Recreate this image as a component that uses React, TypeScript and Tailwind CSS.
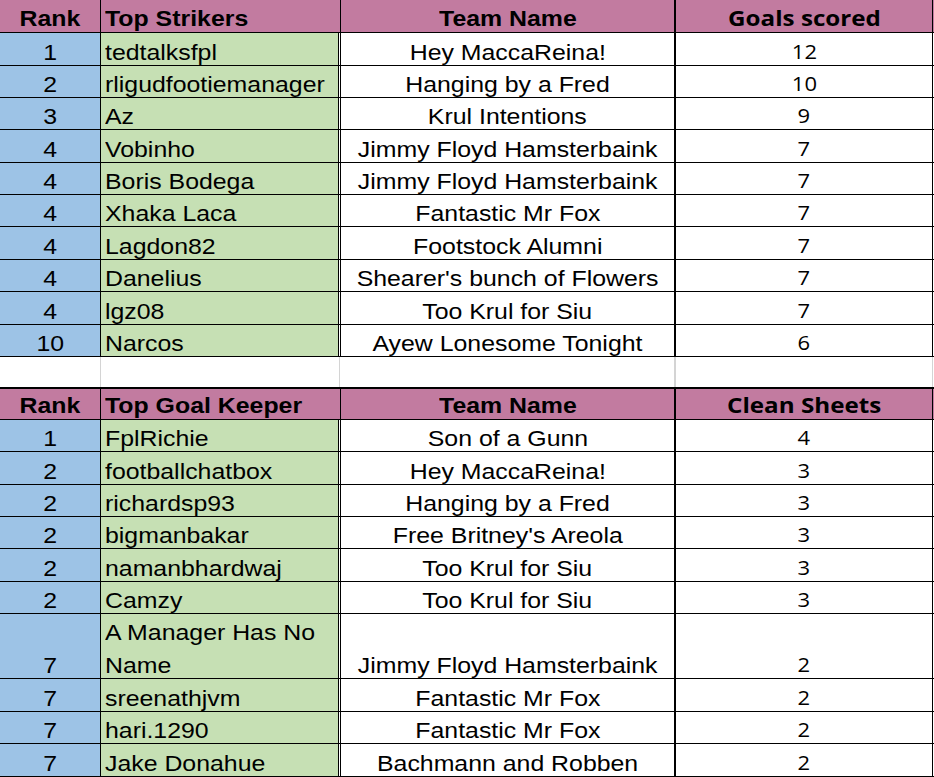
import React from "react"

type Row = {
  rank: string
  name: string[]
  team: string
  count: string
  h: string
}

const arial = "font-['Liberation_Sans',Arial,sans-serif]"
const calibri = "font-['Open_Sans','Noto_Sans',sans-serif]"

const strikers: Row[] = [
  { rank: "1", name: ["tedtalksfpl"], team: "Hey MaccaReina!", count: "12", h: "h-[33px]" },
  { rank: "2", name: ["rligudfootiemanager"], team: "Hanging by a Fred", count: "10", h: "h-[32px]" },
  { rank: "3", name: ["Az"], team: "Krul Intentions", count: "9", h: "h-[32px]" },
  { rank: "4", name: ["Vobinho"], team: "Jimmy Floyd Hamsterbaink", count: "7", h: "h-[33px]" },
  { rank: "4", name: ["Boris Bodega"], team: "Jimmy Floyd Hamsterbaink", count: "7", h: "h-[32px]" },
  { rank: "4", name: ["Xhaka Laca"], team: "Fantastic Mr Fox", count: "7", h: "h-[32px]" },
  { rank: "4", name: ["Lagdon82"], team: "Footstock Alumni", count: "7", h: "h-[33px]" },
  { rank: "4", name: ["Danelius"], team: "Shearer's bunch of Flowers", count: "7", h: "h-[32px]" },
  { rank: "4", name: ["lgz08"], team: "Too Krul for Siu", count: "7", h: "h-[33px]" },
  { rank: "10", name: ["Narcos"], team: "Ayew Lonesome Tonight", count: "6", h: "h-[32px]" },
]

const keepers: Row[] = [
  { rank: "1", name: ["FplRichie"], team: "Son of a Gunn", count: "4", h: "h-[32px]" },
  { rank: "2", name: ["footballchatbox"], team: "Hey MaccaReina!", count: "3", h: "h-[33px]" },
  { rank: "2", name: ["richardsp93"], team: "Hanging by a Fred", count: "3", h: "h-[32px]" },
  { rank: "2", name: ["bigmanbakar"], team: "Free Britney's Areola", count: "3", h: "h-[32px]" },
  { rank: "2", name: ["namanbhardwaj"], team: "Too Krul for Siu", count: "3", h: "h-[33px]" },
  { rank: "2", name: ["Camzy"], team: "Too Krul for Siu", count: "3", h: "h-[32px]" },
  { rank: "7", name: ["A Manager Has No", "Name"], team: "Jimmy Floyd Hamsterbaink", count: "2", h: "h-[65px]" },
  { rank: "7", name: ["sreenathjvm"], team: "Fantastic Mr Fox", count: "2", h: "h-[33px]" },
  { rank: "7", name: ["hari.1290"], team: "Fantastic Mr Fox", count: "2", h: "h-[32px]" },
  { rank: "7", name: ["Jake Donahue"], team: "Bachmann and Robben", count: "2", h: "h-[33px]" },
]

// excel text looks a bit wider than plain arial, so stretch it a little
function Wide({ children, left, num }: { children: React.ReactNode; left?: boolean; num?: boolean }) {
  return (
    <span
      className={`inline-block whitespace-nowrap leading-[24px] ${num ? "scale-x-[1.1]" : "scale-x-[1.13]"} ${left ? "origin-left" : ""}`}
    >
      {children}
    </span>
  )
}

function HeaderRow({ title, last, top }: { title: string; last: string; top?: boolean }) {
  return (
    <div
      className={`flex bg-[#c27ba0] font-bold border-b border-black leading-[24px] ${top ? "h-[33px] border-t-2" : "h-[33px]"}`}
    >
      <div className="w-[101px] border-r border-black flex items-end justify-center pb-[1px] text-[22px]">
        <Wide>Rank</Wide>
      </div>
      <div className="w-[240px] border-r border-black flex items-end pl-[4px] pb-[1px] text-[22px]">
        <Wide left>{title}</Wide>
      </div>
      <div className="w-[335px] border-r-2 border-black flex items-end justify-center pb-[1px] text-[22px]">
        <Wide>Team Name</Wide>
      </div>
      <div className={`w-[257px] border-r border-black flex items-end justify-center pb-[3px] text-[22px] ${calibri}`}>
        <Wide num>{last}</Wide>
      </div>
    </div>
  )
}

function BodyRow({ row }: { row: Row }) {
  return (
    <div className={`flex border-b border-black leading-[24px] ${row.h}`}>
      <div className="w-[101px] border-r border-black bg-[#9dc3e6] flex items-end justify-center text-[22px]">
        <Wide>{row.rank}</Wide>
      </div>
      <div className="w-[238px] border-r border-black bg-[#c6e0b4] flex flex-col justify-end pl-[4px] text-[22px]">
        {row.name.map((line, i) => (
          <div key={i} className={`leading-[24px] ${i < row.name.length - 1 ? "mb-[9px]" : ""}`}>
            <Wide left>{line}</Wide>
          </div>
        ))}
      </div>
      <div className="ml-px w-[336px] border-l border-r-2 border-black flex items-end justify-center text-[22px]">
        <Wide>{row.team}</Wide>
      </div>
      <div className={`w-[257px] border-r border-black flex items-end justify-center pb-[1px] text-[20px] ${calibri}`}>
        <Wide num>{row.count}</Wide>
      </div>
    </div>
  )
}

export default function App() {
  return (
    <div className={`w-[934px] h-[777px] bg-white text-black overflow-hidden ${arial}`}>
      <HeaderRow title="Top Strikers" last="Goals scored" />
      {strikers.map((r, i) => (
        <BodyRow key={i} row={r} />
      ))}

      {/* blank spreadsheet row between the two tables */}
      <div className="flex h-[30px]">
        <div className="w-[101px] border-r border-[#d4d4d4]" />
        <div className="w-[239px] border-r border-[#d4d4d4]" />
        <div className="w-[336px] border-r-2 border-[#d4d4d4]" />
        <div className="w-[257px] border-r border-[#d4d4d4]" />
      </div>

      <HeaderRow title="Top Goal Keeper" last="Clean Sheets" top />
      {keepers.map((r, i) => (
        <BodyRow key={i} row={r} />
      ))}
    </div>
  )
}
